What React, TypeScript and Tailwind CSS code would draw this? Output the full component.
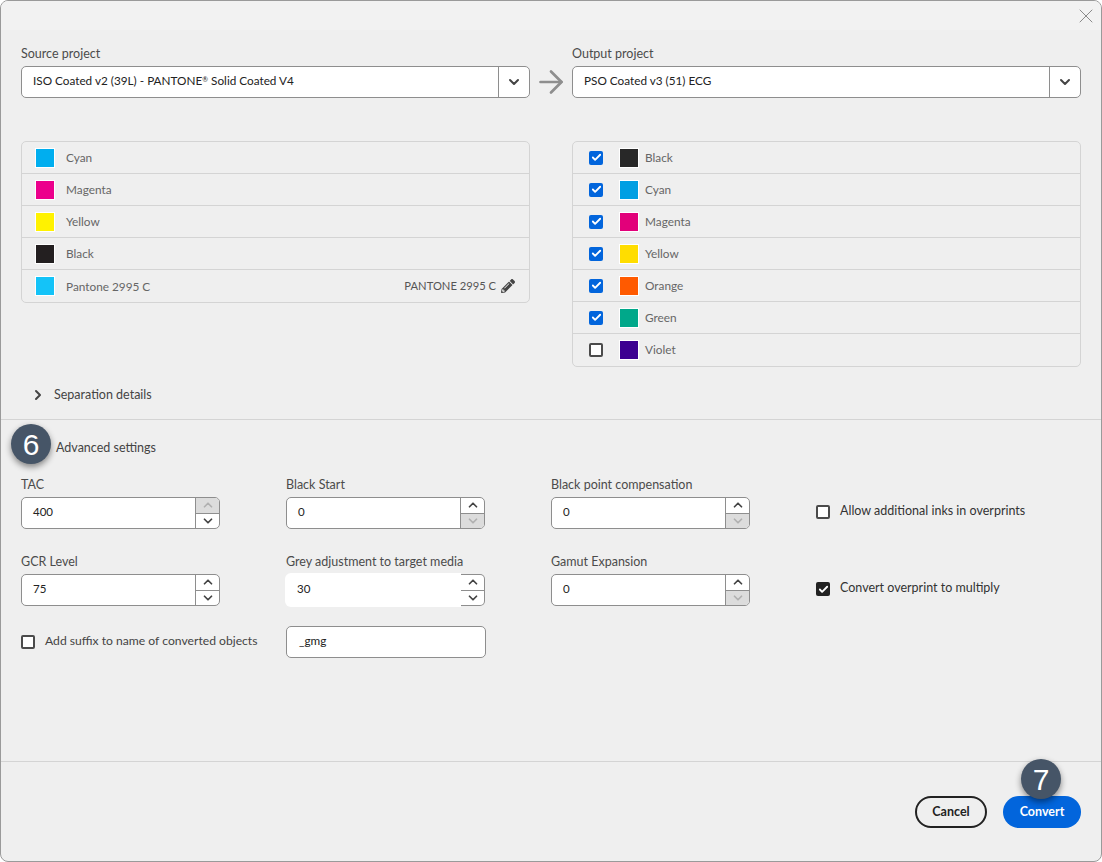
import type { ReactNode } from 'react';
import { ArrowRight, Check, ChevronDown, ChevronRight, ChevronUp, X } from 'lucide-react';
import { FaPencilAlt } from 'react-icons/fa';

const sourceInks = [
  { name: 'Cyan', color: 'bg-[#00aeef]' },
  { name: 'Magenta', color: 'bg-[#ec008c]' },
  { name: 'Yellow', color: 'bg-[#fff200]' },
  { name: 'Black', color: 'bg-[#231f20]' },
  { name: 'Pantone 2995 C', color: 'bg-[#14c3f8]', alias: 'PANTONE 2995 C' },
];

const outputInks = [
  { name: 'Black', color: 'bg-[#282828]', checked: true },
  { name: 'Cyan', color: 'bg-[#009fe3]', checked: true },
  { name: 'Magenta', color: 'bg-[#e2007a]', checked: true },
  { name: 'Yellow', color: 'bg-[#ffdd00]', checked: true },
  { name: 'Orange', color: 'bg-[#ff5a00]', checked: true },
  { name: 'Green', color: 'bg-[#00a88a]', checked: true },
  { name: 'Violet', color: 'bg-[#3c0091]', checked: false },
];

const Select = ({ label, value }: { label: string; value: ReactNode }) => (
  <div>
    <div className="mb-[5px] h-4 leading-[18px] text-[#4b4b4b]">{label}</div>
    <div className="flex h-8 rounded-[5px] border border-[#8e8e8e] bg-white">
      <div className="flex-1 pl-[11px] text-[11.75px] leading-[28px] text-[#222]">{value}</div>
      <div className="flex w-[31px] items-center justify-center border-l border-[#8e8e8e]">
        <ChevronDown size={16} strokeWidth={3} className="text-[#444]" />
      </div>
    </div>
  </div>
);

const Swatch = ({ color }: { color: string }) => (
  <span className={`h-5 w-5 shrink-0 border border-white ${color}`} />
);

const Checkbox = ({ checked, dark }: { checked?: boolean; dark?: boolean }) => {
  if (!checked) {
    return <span className="h-[14px] w-[14px] shrink-0 rounded-[2px] border-2 border-[#4b4b4b] bg-white" />;
  }
  return (
    <span
      className={`flex h-[14px] w-[14px] shrink-0 items-center justify-center rounded-[2px] ${
        dark ? 'bg-[#222]' : 'bg-[#0265dc]'
      }`}
    >
      <Check size={11} strokeWidth={4} className="text-white" />
    </span>
  );
};

const SpinButton = ({ up, disabled }: { up?: boolean; disabled?: boolean }) => {
  const Icon = up ? ChevronUp : ChevronDown;
  return (
    <div className={`flex flex-1 items-center justify-center ${disabled ? 'bg-[#dcdcdc]' : ''}`}>
      <Icon size={14} strokeWidth={3} className={disabled ? 'text-[#b0b0b0]' : 'text-[#444]'} />
    </div>
  );
};

const NumberField = ({
  label,
  value,
  upDisabled,
  downDisabled,
  focused,
}: {
  label: string;
  value: string;
  upDisabled?: boolean;
  downDisabled?: boolean;
  focused?: boolean;
}) => (
  <div>
    <div className="mb-[5px] h-4 leading-[18px] text-[#4b4b4b]">{label}</div>
    {focused ? (
      <div className="flex h-8">
        <div className="-my-px -ml-px w-[176px] rounded-l-[6px] bg-white pl-3 text-[11.5px] leading-[32px] text-[#222]">
          {value}
        </div>
        <div className="flex w-6 flex-col overflow-hidden rounded-r-[5px] border-y border-r border-[#8e8e8e] bg-white">
          <SpinButton up />
          <div className="h-px bg-[#8e8e8e]" />
          <SpinButton />
        </div>
      </div>
    ) : (
      <div className="flex h-8 overflow-hidden rounded-[5px] border border-[#8e8e8e] bg-white">
        <div className="flex-1 pl-[11px] text-[11.5px] leading-[28px] text-[#222]">{value}</div>
        <div className="flex w-6 flex-col border-l border-[#8e8e8e]">
          <SpinButton up disabled={upDisabled} />
          <div className="h-px bg-[#8e8e8e]" />
          <SpinButton disabled={downDisabled} />
        </div>
      </div>
    )}
  </div>
);

const Badge = ({ n, className }: { n: number; className: string }) => (
  <div
    className={`absolute flex h-10 w-10 items-center justify-center rounded-full bg-[#465567] font-['Liberation_Sans',sans-serif] text-[30px] text-white shadow-[0_3px_6px_rgba(0,0,0,0.45)] ${className}`}
  >
    {n}
  </div>
);

const App = () => {
  return (
    <div className="relative h-[862px] w-[1102px] overflow-hidden rounded-[8px] border border-[#9a9a9a] bg-[#efefef] font-['Lato',sans-serif] text-[12.5px]">
      {/* Header */}
      <div className="flex h-[29px] items-center justify-end bg-[#f2f2f2] pr-[3px]">
        <X size={24} strokeWidth={1} className="text-[#8a8a8a]" />
      </div>

      {/* Projects and inks */}
      <div className="grid grid-cols-[509px_42px_509px] items-start px-5 pt-[15px]">
        <div>
          <Select
            label="Source project"
            value={
              <>
                ISO Coated v2 (39L) - PANTONE<sup className="text-[7px]">®</sup> Solid Coated V4
              </>
            }
          />
          <div className="mt-[43px] rounded-[5px] border border-[#d4d4d4]">
            {sourceInks.map((ink) => (
              <div
                key={ink.name}
                className="flex h-8 items-center gap-[11px] border-b border-[#d4d4d4] pl-[13px] pr-[14px] text-[11.8px] leading-[18px] text-[#666] last:border-b-0"
              >
                <Swatch color={ink.color} />
                <span className="flex-1 pt-px">{ink.name}</span>
                {ink.alias && (
                  <span className="flex items-center gap-[5px] text-[11.2px] text-[#555]">
                    {ink.alias}
                    <FaPencilAlt size={14} className="text-[#444]" />
                  </span>
                )}
              </div>
            ))}
          </div>
        </div>

        <div className="flex h-[74px] items-center justify-center">
          <ArrowRight size={36} strokeWidth={1.8} className="text-[#8e8e8e]" />
        </div>

        <div>
          <Select label="Output project" value="PSO Coated v3 (51) ECG" />
          <div className="mt-[43px] rounded-[5px] border border-[#d4d4d4]">
            {outputInks.map((ink) => (
              <div
                key={ink.name}
                className="flex h-8 items-center border-b border-[#d4d4d4] pl-4 text-[11.8px] leading-[18px] text-[#666] last:border-b-transparent"
              >
                <Checkbox checked={ink.checked} />
                <span className={`ml-4 h-5 w-5 shrink-0 border border-white ${ink.color}`} />
                <span className="ml-[6px] pt-px">{ink.name}</span>
              </div>
            ))}
          </div>
        </div>
      </div>

      <div className="mt-5 flex h-4 items-center gap-2 pl-[29px] leading-[18px] text-[#444]">
        <ChevronRight size={16} strokeWidth={3} className="text-[#444]" />
        <span>Separation details</span>
      </div>

      <div className="mt-4 border-t border-[#d4d4d4] pl-5 pt-5">
        <div className="h-4 pl-[35px] leading-4 text-[#444]">Advanced settings</div>

        <div className="mt-5 grid grid-cols-[199px_199px_199px_1fr] gap-x-[66px] gap-y-6">
          <NumberField label="TAC" value="400" upDisabled />
          <NumberField label="Black Start" value="0" downDisabled />
          <NumberField label="Black point compensation" value="0" downDisabled />
          <label className="flex items-center gap-[10px] self-start pt-[29px] leading-[14px] text-[#333]">
            <Checkbox />
            <span className="-mt-0.5">Allow additional inks in overprints</span>
          </label>

          <NumberField label="GCR Level" value="75" />
          <NumberField label="Grey adjustment to target media" value="30" focused />
          <NumberField label="Gamut Expansion" value="0" downDisabled />
          <label className="flex items-center gap-[10px] self-start pt-[29px] leading-[14px] text-[#333]">
            <Checkbox checked dark />
            <span className="-mt-0.5">Convert overprint to multiply</span>
          </label>
        </div>

        <div className="mt-5 flex h-8 items-center">
          <label className="flex w-[265px] items-center gap-[10px] text-[12.15px] text-[#444]">
            <Checkbox />
            <span className="-mt-0.5">Add suffix to name of converted objects</span>
          </label>
          <div className="h-8 w-[200px] rounded-[5px] border border-[#8e8e8e] bg-white pl-3 text-[11.75px] leading-[28px] text-[#222]">
            _gmg
          </div>
        </div>
      </div>

      {/* Footer */}
      <div className="mt-[103px] flex justify-end gap-4 border-t border-[#d4d4d4] pr-5 pt-[34px]">
        <button className="h-8 w-[72px] rounded-full border-2 border-[#222] font-bold text-[#222]">Cancel</button>
        <button className="h-8 w-[78px] rounded-full bg-[#0265dc] font-bold text-white">Convert</button>
      </div>

      <Badge n={6} className="left-[10px] top-[423px]" />
      <Badge n={7} className="left-[1020px] top-[758px]" />
    </div>
  );
};

export default App;
